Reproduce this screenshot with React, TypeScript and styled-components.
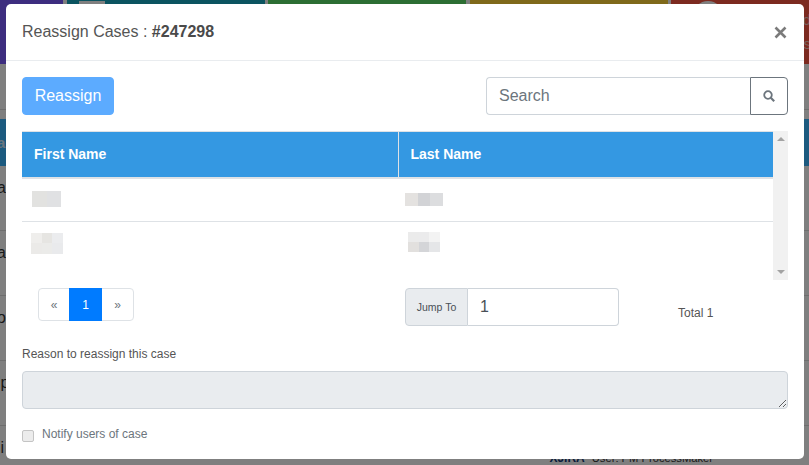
import React from "react";
import styled, { createGlobalStyle } from "styled-components";

const GlobalStyle = createGlobalStyle`
  html, body {
    margin: 0;
    padding: 0;
    width: 809px;
    height: 465px;
    overflow: hidden;
    background: #fff;
    font-family: "Liberation Sans", Arial, sans-serif;
  }
  * { box-sizing: border-box; }
`;

const Page = styled.div`
  position: relative;
  width: 809px;
  height: 465px;
  overflow: hidden;
  background: #fff;
`;

const Tiles = styled.div`
  display: grid;
  grid-template-columns: 63px 198px 198px 198px 140px;
  column-gap: 3.5px;
  height: 64px;
`;

const Tile = styled.div<{ $color: string }>`
  overflow: hidden;
  background: ${(p) => p.$color};
`;

const TileAvatar = styled.div`
  float: left;
  width: 30px;
  height: 30px;
  margin: 1px 0 0 22px;
  border-radius: 50%;
  background: #fff;
`;

const TileImage = styled.div`
  width: 26px;
  height: 14px;
  margin: 1px 0 0 12px;
  background: #fff;
`;

const TileText = styled.div`
  padding-top: 8px;
  text-align: right;
  font-size: 15px;
  line-height: 24px;
  color: #f0c0b8;
`;

const BehindSpacer = styled.div`
  height: 46px;
  border-bottom: 1px solid #ddd;
`;

const BehindGap = styled.div`
  height: 9px;
`;

const BehindHead = styled.div`
  display: flex;
  align-items: center;
  height: 47px;
  background: #38b4ff;
  color: #d4ecff;
  font-size: 15px;
  font-weight: 700;
`;

const BehindRow = styled.div`
  display: flex;
  align-items: flex-start;
  justify-content: space-between;
  height: 65px;
  padding: 13px 96px 0 0;
  border-bottom: 1px solid #ddd;
  font-size: 16px;
  line-height: 18px;
  color: #333;
`;

const ClippedText = styled.span`
  margin-left: -3px;
`;

const BehindUser = styled.span`
  display: flex;
  align-items: center;
  gap: 7px;
  margin-top: 10px;
  font-size: 11.2px;
`;

const JiraMark = styled.span`
  font-weight: 700;
  color: #123a77;
  font-size: 12px;
`;

const Backdrop = styled.div`
  position: absolute;
  inset: 0;
  background: rgba(0, 0, 0, 0.5);
`;

const Modal = styled.div`
  position: absolute;
  left: 6px;
  top: 4px;
  width: 798px;
  height: 455px;
  background: #fff;
  border-radius: 5px;
  color: #212529;
`;

const ModalHeader = styled.div`
  display: flex;
  align-items: center;
  justify-content: space-between;
  height: 57px;
  padding: 0 16px;
  border-bottom: 1px solid #e9ecef;
`;

const ModalTitle = styled.div`
  font-size: 16px;
  color: #555;
  b {
    color: #4a4a4a;
  }
`;

const CloseIcon = styled.svg`
  width: 13px;
  height: 13px;
  margin: 0 1px 0 0;
  display: block;
`;

const ModalBody = styled.div`
  padding: 16px 16px 0;
`;

const Toolbar = styled.div`
  display: flex;
  justify-content: space-between;
  margin-bottom: 16px;
`;

const ReassignButton = styled.button`
  width: 92px;
  height: 38px;
  padding: 0;
  border: 1px solid #5cabff;
  border-radius: 4px;
  background: #5cabff;
  color: #fff;
  font: 400 16px "Liberation Sans", Arial, sans-serif;
`;

const SearchGroup = styled.div`
  display: flex;
  width: 302px;
  height: 38px;
`;

const SearchInput = styled.input`
  flex: 1;
  min-width: 0;
  padding: 0 12px;
  border: 1px solid #ced4da;
  border-right: 0;
  border-radius: 4px 0 0 4px;
  font: 400 16px "Liberation Sans", Arial, sans-serif;
  outline: none;
  &::placeholder {
    color: #6c757d;
    opacity: 1;
  }
`;

const SearchButton = styled.button`
  display: flex;
  align-items: center;
  justify-content: center;
  width: 38px;
  padding: 0;
  border: 1px solid #6c757d;
  border-radius: 0 4px 4px 0;
  background: #fff;
`;

const TableArea = styled.div`
  display: flex;
  height: 149px;
`;

const Table = styled.table`
  flex: 1;
  align-self: flex-start;
  table-layout: fixed;
  border-collapse: collapse;
  width: 751px;
  font-size: 14px;
`;

const HeadCell = styled.th`
  height: 46px;
  padding: 0 12px 1px;
  background: #3498e2;
  color: #fff;
  font-size: 14px;
  font-weight: 700;
  text-align: left;
  border-top: 1px solid #dee2e6;
  border-bottom: 2px solid #dee2e6;
  & + & {
    border-left: 1px solid #dee2e6;
  }
`;

const BodyCell = styled.td<{ $last?: boolean }>`
  height: ${(p) => (p.$last ? 43 : 44)}px;
  padding: 0;
  border-bottom: ${(p) => (p.$last ? "0" : "1px solid #dee2e6")};
`;

const Redacted = styled.div<{ $w: number; $h: number; $x: number; $y: number; $cols: number }>`
  display: grid;
  grid-template-columns: repeat(${(p) => p.$cols}, 1fr);
  grid-auto-rows: 1fr;
  width: ${(p) => p.$w}px;
  height: ${(p) => p.$h}px;
  margin-left: ${(p) => p.$x}px;
  transform: translateY(${(p) => p.$y}px);
  filter: blur(0.4px);
`;

const Pixel = styled.span<{ $color: string }>`
  background: ${(p) => p.$color};
`;

const ScrollTrack = styled.div`
  display: flex;
  flex-direction: column;
  justify-content: space-between;
  align-items: center;
  width: 15px;
  padding: 6px 0;
  background: #f1f1f1;
`;

const Arrow = styled.span<{ $down?: boolean }>`
  width: 0;
  height: 0;
  border-left: 4px solid transparent;
  border-right: 4px solid transparent;
  border-bottom: ${(p) => (p.$down ? "0" : "4px solid #a3a3a3")};
  border-top: ${(p) => (p.$down ? "4px solid #a3a3a3" : "0")};
`;

const PagerRow = styled.div`
  display: grid;
  grid-template-columns: 383px 273px 1fr;
  align-items: start;
  margin-top: 8px;
  height: 38px;
`;

const Pager = styled.ul`
  display: flex;
  width: 96px;
  height: 33px;
  margin: 0 0 0 16px;
  padding: 0;
  list-style: none;
  border: 1px solid #dee2e6;
  border-radius: 4px;
`;

const PageItem = styled.li<{ $active?: boolean; $w: number }>`
  display: flex;
  align-items: center;
  justify-content: center;
  width: ${(p) => p.$w}px;
  margin: ${(p) => (p.$active ? "-1px 0" : "0")};
  font-size: 12px;
  background: ${(p) => (p.$active ? "#007bff" : "transparent")};
  color: ${(p) => (p.$active ? "#fff" : "#6c757d")};
`;

const JumpGroup = styled.div`
  display: flex;
  width: 214px;
  height: 38px;
`;

const JumpLabel = styled.span`
  display: flex;
  align-items: center;
  justify-content: center;
  width: 63px;
  border: 1px solid #ced4da;
  border-radius: 4px 0 0 4px;
  background: #e9ecef;
  color: #495057;
  font-size: 10.5px;
`;

const JumpInput = styled.input`
  flex: 1;
  min-width: 0;
  padding: 0 12px;
  border: 1px solid #ced4da;
  border-left: 0;
  border-radius: 0 4px 4px 0;
  color: #495057;
  font: 400 16px "Liberation Sans", Arial, sans-serif;
  outline: none;
`;

const TotalText = styled.div`
  margin-top: 18px;
  font-size: 12px;
  line-height: 14px;
  color: #555;
`;

const ReasonLabel = styled.label`
  display: block;
  margin-top: 21px;
  font-size: 12px;
  line-height: 14px;
  color: #555;
`;

const ReasonInput = styled.textarea`
  display: block;
  width: 100%;
  height: 38px;
  margin-top: 10px;
  padding: 6px 12px;
  border: 1px solid #ced4da;
  border-radius: 4px;
  background: #e9ecef;
`;

const NotifyRow = styled.label`
  display: flex;
  align-items: flex-start;
  gap: 8px;
  margin-top: 18px;
  font-size: 12px;
  line-height: 14px;
  color: #6c757d;
`;

const CheckBox = styled.span`
  width: 12px;
  height: 12px;
  margin-top: 3px;
  border: 1px solid #c4c4c4;
  border-radius: 2px;
  background: #ececec;
`;

const blur1 = ["#e2e2e0", "#e0e1e3"];
const blur2 = ["#efeeec", "#e6e5e2", "#ebecee", "#ebeae8", "#ebebe9", "#e9eaec"];
const blur3 = ["#e4e2e0", "#d2d3d6", "#dcdddf"];
const blur4 = ["#ebebeb", "#ebebec", "#f3f3f3", "#e2e0de", "#d4d5d8", "#e5e6e8"];

function Blurred(props: { colors: string[]; cols: number; w: number; h: number; x: number; y: number }) {
  return (
    <Redacted $cols={props.cols} $w={props.w} $h={props.h} $x={props.x} $y={props.y}>
      {props.colors.map((c, i) => (
        <Pixel key={i} $color={c} />
      ))}
    </Redacted>
  );
}

export default function App() {
  return (
    <Page>
      <GlobalStyle />
      <Tiles>
        <Tile $color="#7a5aff" />
        <Tile $color="#17a9c0">
          <TileImage />
        </Tile>
        <Tile $color="#58dc66" />
        <Tile $color="#ffd335" />
        <Tile $color="#f95440">
          <TileAvatar />
          <TileText>
            d
            <br />s
          </TileText>
        </Tile>
      </Tiles>
      <BehindSpacer />
      <BehindGap />
      <BehindHead>
        <ClippedText>a</ClippedText>
      </BehindHead>
      <BehindRow>
        <ClippedText>a</ClippedText>
      </BehindRow>
      <BehindRow>
        <ClippedText>a</ClippedText>
      </BehindRow>
      <BehindRow>
        <ClippedText>o</ClippedText>
      </BehindRow>
      <BehindRow>
        <ClippedText>lp</ClippedText>
      </BehindRow>
      <BehindRow>
        <ClippedText>li</ClippedText>
        <BehindUser>
          <JiraMark>XJIRA</JiraMark>
          User: PM ProcessMaker
        </BehindUser>
      </BehindRow>
      <Backdrop />

      <Modal>
        <ModalHeader>
          <ModalTitle>
            Reassign Cases : <b>#247298</b>
          </ModalTitle>
          <CloseIcon viewBox="0 0 13 13">
            <path d="M1.5 1.5l10 10M11.5 1.5l-10 10" stroke="#7b7b7b" strokeWidth="2.6" fill="none" />
          </CloseIcon>
        </ModalHeader>
        <ModalBody>
          <Toolbar>
            <ReassignButton>Reassign</ReassignButton>
            <SearchGroup>
              <SearchInput placeholder="Search" />
              <SearchButton>
                <svg width="12" height="12" viewBox="0 0 12 12">
                  <circle cx="5" cy="5" r="3.8" stroke="#6c757d" strokeWidth="1.8" fill="none" />
                  <path d="M7.8 7.8l3.4 3.4" stroke="#6c757d" strokeWidth="2.2" />
                </svg>
              </SearchButton>
            </SearchGroup>
          </Toolbar>

          <TableArea>
            <Table>
              <colgroup>
                <col width="376" />
                <col width="375" />
              </colgroup>
              <thead>
                <tr>
                  <HeadCell>First Name</HeadCell>
                  <HeadCell>Last Name</HeadCell>
                </tr>
              </thead>
              <tbody>
                <tr>
                  <BodyCell>
                    <Blurred colors={blur1} cols={2} w={29} h={16} x={10} y={-1} />
                  </BodyCell>
                  <BodyCell>
                    <Blurred colors={blur3} cols={3} w={38} h={13} x={7} y={0} />
                  </BodyCell>
                </tr>
                <tr>
                  <BodyCell $last>
                    <Blurred colors={blur2} cols={3} w={32} h={21} x={9} y={0} />
                  </BodyCell>
                  <BodyCell $last>
                    <Blurred colors={blur4} cols={3} w={32} h={20} x={10} y={-1} />
                  </BodyCell>
                </tr>
              </tbody>
            </Table>
            <ScrollTrack>
              <Arrow />
              <Arrow $down />
            </ScrollTrack>
          </TableArea>

          <PagerRow>
            <Pager>
              <PageItem $w={30}>«</PageItem>
              <PageItem $w={33} $active>
                1
              </PageItem>
              <PageItem $w={31}>»</PageItem>
            </Pager>
            <JumpGroup>
              <JumpLabel>Jump To</JumpLabel>
              <JumpInput defaultValue="1" />
            </JumpGroup>
            <TotalText>Total 1</TotalText>
          </PagerRow>

          <ReasonLabel>Reason to reassign this case</ReasonLabel>
          <ReasonInput disabled />

          <NotifyRow>
            <CheckBox />
            Notify users of case
          </NotifyRow>
        </ModalBody>
      </Modal>
    </Page>
  );
}
